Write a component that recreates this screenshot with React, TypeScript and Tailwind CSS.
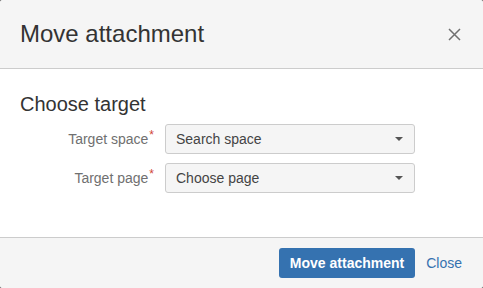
const CloseIcon = () => (
  <svg width="13" height="13" viewBox="0 0 13 13" className="block">
    <path d="M1 1 L12 12 M12 1 L1 12" stroke="#707070" strokeWidth="1.5" fill="none" />
  </svg>
);

const Caret = () => (
  <svg width="8" height="4" viewBox="0 0 8 4" className="block">
    <path d="M0 0 L8 0 L4 4 Z" fill="#555" />
  </svg>
);

interface FieldProps {
  label: string;
  placeholder: string;
}

const Field: React.FC<FieldProps> = ({ label, placeholder }) => (
  <div className="flex items-center">
    <div className="w-[135px] text-right text-[14px] leading-[14px] text-[#707070] pr-[1px]">
      {label}
      <span className="relative -top-[5px] text-[12px] text-[#d04437] ml-[1px]">*</span>
    </div>
    <div className="ml-[10px] flex h-[30px] w-[250px] items-center justify-between rounded-[3px] border border-[#ccc] bg-[#f5f5f5] pl-[10px] pr-[11px] text-[14px] leading-[14px] text-[#444]">
      <span>{placeholder}</span>
      <Caret />
    </div>
  </div>
);

export default function App() {
  return (
    <div className="h-[288px] w-[483px] bg-[#707070] font-['Liberation_Sans',Arial,sans-serif]">
      <div className="flex h-full w-full flex-col overflow-hidden rounded-[3px] bg-white">
        <div className="flex h-[69px] items-center justify-between border-b border-[#ccc] bg-[#f5f5f5] pl-5 pr-[22px]">
          <h1 className="text-[24px] leading-[24px] text-[#333]">Move attachment</h1>
          <CloseIcon />
        </div>
        <div className="h-[168px] px-5 pt-[25px]">
          <h2 className="text-[20px] leading-[20px] text-[#333]">Choose target</h2>
          <div className="mt-[10px] flex flex-col gap-[9px]">
            <Field label="Target space" placeholder="Search space" />
            <Field label="Target page" placeholder="Choose page" />
          </div>
        </div>
        <div className="flex h-[51px] items-center justify-end border-t border-[#ccc] bg-[#f5f5f5] pr-[21px]">
          <button className="h-[30px] rounded-[3px] bg-[#3572b0] px-[11px] text-[14px] font-bold leading-[14px] text-white">
            Move attachment
          </button>
          <a href="#" className="ml-[11px] text-[14px] leading-[14px] text-[#3572b0]">Close</a>
        </div>
      </div>
    </div>
  );
}
